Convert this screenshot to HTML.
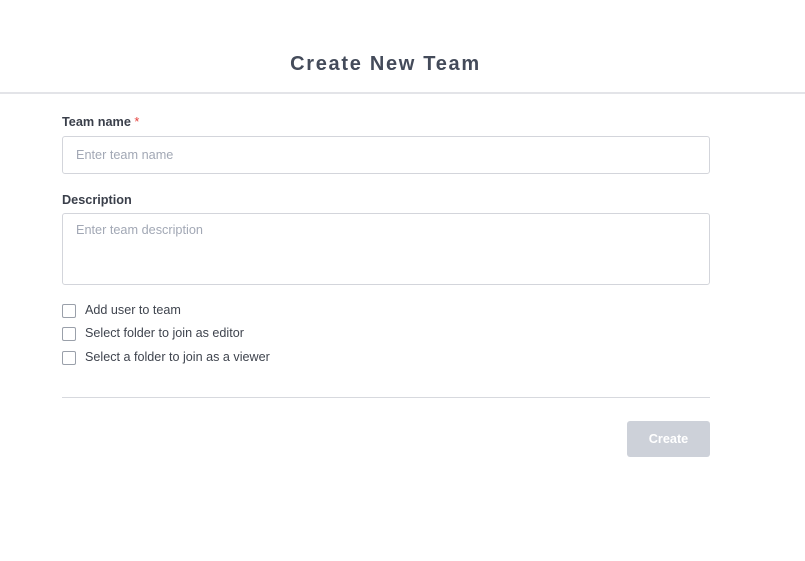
<!DOCTYPE html>
<html><head><style>
*{box-sizing:border-box;margin:0;padding:0}
body{width:805px;height:561px;background:#fff;font-family:"Liberation Sans",sans-serif;position:relative;overflow:hidden}
.hdr{position:absolute;left:0;top:0;width:805px;height:94px;border-bottom:2px solid #e3e4e8}
.title{position:absolute;top:53px;left:0;width:771px;text-align:center;font-size:20px;font-weight:bold;letter-spacing:1.7px;color:#444b5a}
.lbl{position:absolute;left:62px;font-size:12.7px;font-weight:bold;color:#3a3f4a}
.lbl span{color:#e5403c;font-weight:normal}
.inp{position:absolute;left:62px;width:648px;border:1px solid #d3d5db;border-radius:3px;font-size:12.7px;color:#a2a8b5;padding-left:13px}
.cb{position:absolute;left:62px;font-size:12.6px;color:#3f444e}
.cb i{position:absolute;left:0;top:1px;width:14px;height:14px;border:1px solid #9aa0aa;border-radius:2px}
.cb b{font-weight:normal;position:absolute;left:23px;white-space:nowrap}
.hr{position:absolute;left:62px;top:397px;width:648px;height:1px;background:#d7d9de}
.btn{position:absolute;left:627px;top:421px;width:83px;height:36px;background:#cdd1d9;border-radius:3px;color:#fff;font-size:12.7px;font-weight:bold;text-align:center;line-height:36px}
</style></head><body>
<div class="hdr"></div>
<div class="title">Create New Team</div>
<div class="lbl" style="top:115px">Team name <span>*</span></div>
<div class="inp" style="top:136px;height:38px;line-height:36px">Enter team name</div>
<div class="lbl" style="top:193px">Description</div>
<div class="inp" style="top:213px;height:72px;padding-top:9px">Enter team description</div>
<div class="cb" style="top:303px"><i></i><b>Add user to team</b></div>
<div class="cb" style="top:326px"><i></i><b>Select folder to join as editor</b></div>
<div class="cb" style="top:350px"><i></i><b>Select a folder to join as a viewer</b></div>
<div class="hr"></div>
<div class="btn">Create</div>
</body></html>
